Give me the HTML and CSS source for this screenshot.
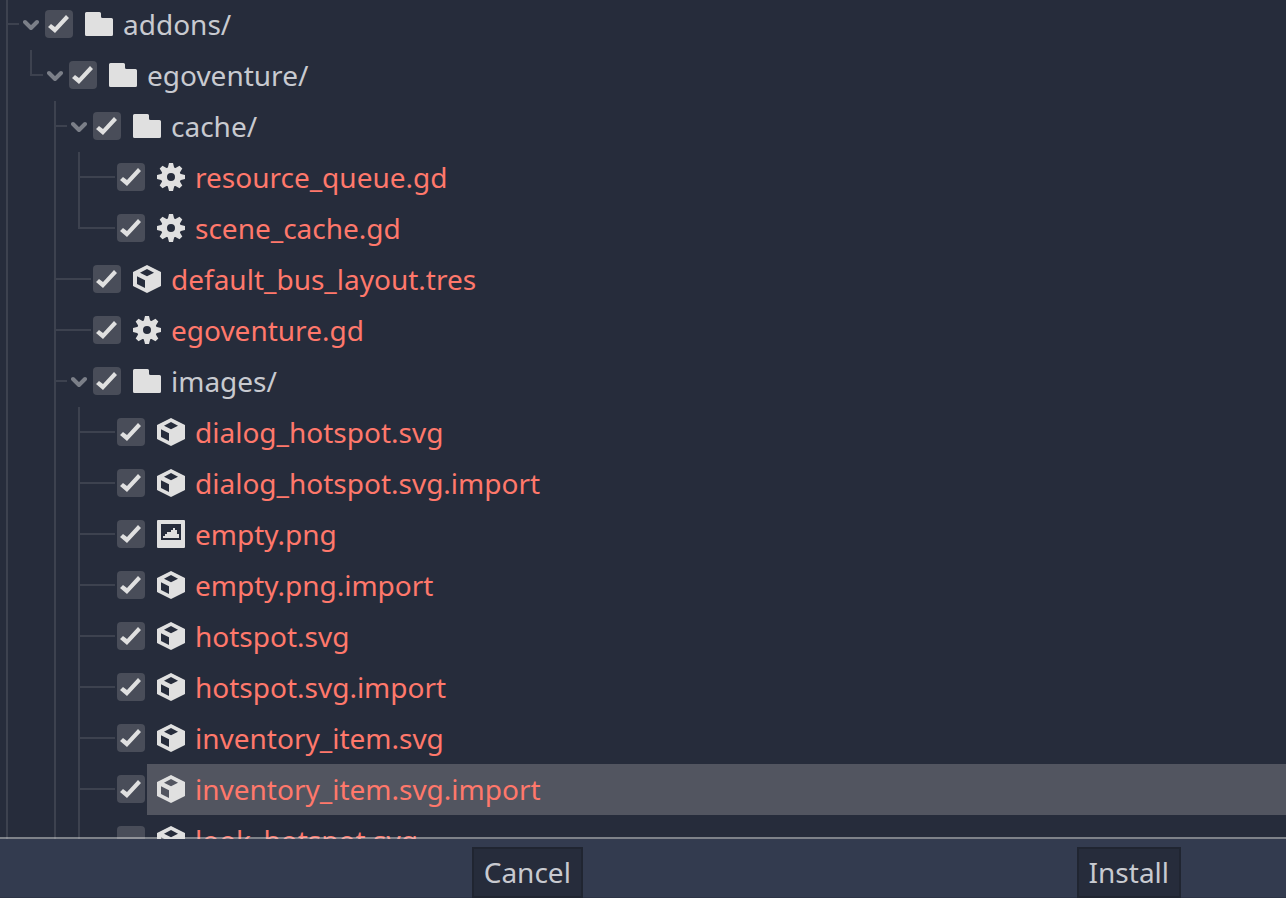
FILE: index.html
```html
<!DOCTYPE html>
<html lang="en">
<head>
<meta charset="utf-8">
<title>Install</title>
<link rel="stylesheet" href="styles.css">
</head>
<body>
<svg class="sprite" aria-hidden="true">
  <symbol id="chevron" viewBox="0 0 16 12"><path d="M2 3 8 9 14 3" fill="none" stroke="currentColor" stroke-width="4" stroke-linecap="round" stroke-linejoin="round"/></symbol>
  <symbol id="folder" viewBox="0 0 28 28"><path d="M1.500 2h13a1.500 1.500 0 0 1 1.500 1.500V6.500A1.500 1.500 0 0 0 17.500 8h9a1.500 1.500 0 0 1 1.500 1.500v15a1.500 1.500 0 0 1-1.500 1.500h-25A1.500 1.500 0 0 1 0 24.500v-21A1.500 1.500 0 0 1 1.500 2z" fill="currentColor"/></symbol>
  <symbol id="gear" viewBox="0 0 28 28">
    <circle cx="14" cy="14" r="7" fill="none" stroke="currentColor" stroke-width="6"/>
    <g fill="currentColor">
      <path id="teeth" d="M10.500 6 12 0h4l1.500 6zM10.500 22 12 28h4l1.500-6z"/>
      <use href="#teeth" transform="rotate(45 14 14)"/>
      <use href="#teeth" transform="rotate(90 14 14)"/>
      <use href="#teeth" transform="rotate(135 14 14)"/>
    </g>
  </symbol>
  <symbol id="cube" viewBox="0 0 28 28"><path fill="currentColor" fill-rule="evenodd" d="M14 0 28 7v14l-14 7L0 21V7zM14 4 7 7.700l7 3.600 7-3.600zM4 11.300v7.700l8 4v-7.700z"/></symbol>
  <symbol id="image" viewBox="0 0 28 28"><path fill="currentColor" fill-rule="evenodd" d="M1 0h26a1 1 0 0 1 1 1v26a1 1 0 0 1-1 1H1a1 1 0 0 1-1-1V1a1 1 0 0 1 1-1zM4 4v16h20V4zM6 18v-2h2v-2h2v-2h4v-2h2V8h2v2h2v4h2v4z"/></symbol>
</svg>
<main class="tree-panel">
  <ul class="tree">
    <li class="node node-continues">
      <div class="row row-branch"><button class="toggle" type="button" aria-label="Collapse addons"><svg><use href="#chevron"/></svg></button><input class="check" type="checkbox" id="f0" checked><label class="cell" for="f0"><svg class="icon"><use href="#folder"/></svg>addons/</label></div>
      <ul class="children">
        <li class="node">
          <div class="row row-branch"><button class="toggle" type="button" aria-label="Collapse egoventure"><svg><use href="#chevron"/></svg></button><input class="check" type="checkbox" id="f1" checked><label class="cell" for="f1"><svg class="icon"><use href="#folder"/></svg>egoventure/</label></div>
          <ul class="children">
            <li class="node">
              <div class="row row-branch"><button class="toggle" type="button" aria-label="Collapse cache"><svg><use href="#chevron"/></svg></button><input class="check" type="checkbox" id="f2" checked><label class="cell" for="f2"><svg class="icon"><use href="#folder"/></svg>cache/</label></div>
              <ul class="children">
                <li class="node"><div class="row"><input class="check" type="checkbox" id="f3" checked><label class="cell conflict" for="f3"><svg class="icon"><use href="#gear"/></svg>resource_queue.gd</label></div></li>
                <li class="node"><div class="row"><input class="check" type="checkbox" id="f4" checked><label class="cell conflict" for="f4"><svg class="icon"><use href="#gear"/></svg>scene_cache.gd</label></div></li>
              </ul>
            </li>
            <li class="node"><div class="row"><input class="check" type="checkbox" id="f5" checked><label class="cell conflict" for="f5"><svg class="icon"><use href="#cube"/></svg>default_bus_layout.tres</label></div></li>
            <li class="node"><div class="row"><input class="check" type="checkbox" id="f6" checked><label class="cell conflict" for="f6"><svg class="icon"><use href="#gear"/></svg>egoventure.gd</label></div></li>
            <li class="node node-continues">
              <div class="row row-branch"><button class="toggle" type="button" aria-label="Collapse images"><svg><use href="#chevron"/></svg></button><input class="check" type="checkbox" id="f7" checked><label class="cell" for="f7"><svg class="icon"><use href="#folder"/></svg>images/</label></div>
              <ul class="children">
                <li class="node"><div class="row"><input class="check" type="checkbox" id="f8" checked><label class="cell conflict" for="f8"><svg class="icon"><use href="#cube"/></svg>dialog_hotspot.svg</label></div></li>
                <li class="node"><div class="row"><input class="check" type="checkbox" id="f9" checked><label class="cell conflict" for="f9"><svg class="icon"><use href="#cube"/></svg>dialog_hotspot.svg.import</label></div></li>
                <li class="node"><div class="row"><input class="check" type="checkbox" id="f10" checked><label class="cell conflict" for="f10"><svg class="icon"><use href="#image"/></svg>empty.png</label></div></li>
                <li class="node"><div class="row"><input class="check" type="checkbox" id="f11" checked><label class="cell conflict" for="f11"><svg class="icon"><use href="#cube"/></svg>empty.png.import</label></div></li>
                <li class="node"><div class="row"><input class="check" type="checkbox" id="f12" checked><label class="cell conflict" for="f12"><svg class="icon"><use href="#cube"/></svg>hotspot.svg</label></div></li>
                <li class="node"><div class="row"><input class="check" type="checkbox" id="f13" checked><label class="cell conflict" for="f13"><svg class="icon"><use href="#cube"/></svg>hotspot.svg.import</label></div></li>
                <li class="node"><div class="row"><input class="check" type="checkbox" id="f14" checked><label class="cell conflict" for="f14"><svg class="icon"><use href="#cube"/></svg>inventory_item.svg</label></div></li>
                <li class="node"><div class="row"><input class="check" type="checkbox" id="f15" checked><label class="cell conflict selected" for="f15"><svg class="icon"><use href="#cube"/></svg>inventory_item.svg.import</label></div></li>
                <li class="node node-continues"><div class="row"><input class="check" type="checkbox" id="f16"><label class="cell conflict" for="f16"><svg class="icon"><use href="#cube"/></svg>look_hotspot.svg</label></div></li>
              </ul>
            </li>
          </ul>
        </li>
      </ul>
    </li>
  </ul>
</main>
<footer class="actions">
  <button class="action action-cancel" type="button">Cancel</button>
  <button class="action action-install" type="button">Install</button>
</footer>
</body>
</html>
```

FILE: styles.css
```css
:root {
  --base: #262c3b;
  --panel: #333b4f;
  --line: #3d424f;
  --text: #c8cad0;
  --conflict: #ff786b;
  --icon: #e0e0e0;
}

* {
  box-sizing: border-box;
}

body {
  display: flex;
  flex-direction: column;
  height: 100vh;
  margin: 0;
  overflow: hidden;
  background: var(--base);
  color: var(--text);
  font-family: "Noto Sans", sans-serif;
  font-size: 28px;
  line-height: 38px;
}

.sprite {
  display: none;
}

.tree-panel {
  position: relative;
  flex: 1;
  min-height: 0;
  overflow: hidden;
}

/* Translucent bottom edge, drawn over the scrolled rows. */
.tree-panel::after {
  content: "";
  position: absolute;
  right: 0;
  bottom: 0;
  left: 0;
  height: 2px;
  background: rgba(224, 224, 224, 0.48);
}

.tree,
.children {
  margin: 0;
  padding: 0;
  list-style: none;
}

.tree {
  margin-top: -1px;
  padding-left: 6px;
}

.children {
  padding-left: 24px;
}

/* Vertical guide; the last sibling stops at its own row's middle. */
.node {
  background: linear-gradient(var(--line), var(--line)) 0 0 / 2px 100% no-repeat;
}

.node:last-child:not(.node-continues) {
  background-size: 2px 26px;
}

/* Horizontal guide, up to the toggle or the tick box. */
.row {
  display: flex;
  align-items: center;
  height: 51px;
  padding-left: 39px;
  background: linear-gradient(var(--line), var(--line)) 0 24px / 37px 2px no-repeat;
}

.row-branch {
  padding-left: 17px;
  background-size: 13px 2px;
}

.toggle {
  width: 16px;
  height: 12px;
  margin: 0 6px 0 0;
  padding: 0;
  border: 0;
  background: none;
  color: #7b7f88;
}

.toggle svg {
  display: block;
  width: 16px;
  height: 12px;
}

.check {
  appearance: none;
  flex: none;
  width: 28px;
  height: 28px;
  margin: 0 2px 1px 0;
  border-radius: 4px;
  background: #494d59;
}

.check:checked::before {
  content: "";
  display: block;
  width: 28px;
  height: 28px;
  background: var(--icon);
  clip-path: polygon(3px 17px, 6px 14px, 10px 17px, 21px 5px, 24px 8px, 10px 23px);
}

.cell {
  display: flex;
  flex: 1;
  align-items: center;
  gap: 10px;
  height: 100%;
  padding: 0 0 2px 10px;
  white-space: nowrap;
}

.conflict {
  color: var(--conflict);
}

.selected {
  background: #525560;
}

.icon {
  flex: none;
  width: 28px;
  height: 28px;
  margin-top: 1px;
  color: var(--icon);
}

.actions {
  display: grid;
  grid-template-columns: 472fr auto 494fr auto 105fr;
  padding-top: 8px;
  background: var(--panel);
  box-shadow: inset 0 -1px #2d3446;
}

.action {
  height: 51px;
  padding: 0 10px 2px;
  border: 2px solid #202531;
  background: var(--base);
  color: var(--text);
  font: inherit;
}

.action-cancel {
  grid-column: 2;
}

.action-install {
  grid-column: 4;
}
```
